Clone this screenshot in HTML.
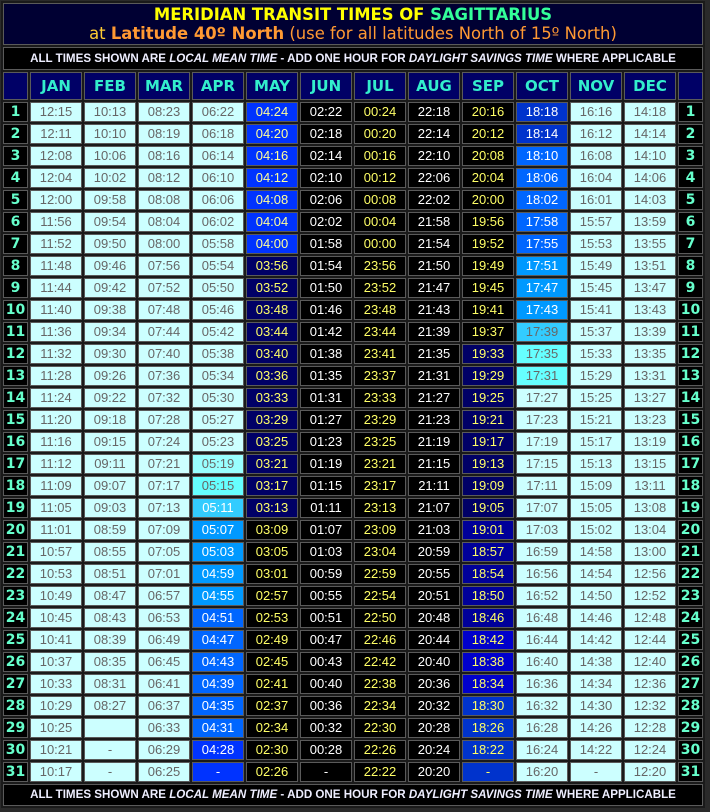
<!DOCTYPE html>
<html><head><meta charset="utf-8"><style>
body{margin:0;background:#2a2a2a;width:710px;height:812px;overflow:hidden}
table{position:absolute;left:1px;top:1px;border-collapse:separate;border-spacing:2px;background:#1a1a1a}
td{border:1px solid #5a5a5a;padding:0;text-align:center;font-family:"Liberation Sans",Arial,sans-serif;font-size:13px;height:20px;line-height:18px;box-sizing:border-box;width:52px;background:#000;color:#fff}
td.d{width:25px;font-family:"DejaVu Sans",Verdana,sans-serif;font-weight:bold;font-size:14px;color:#66ffcc;background:#000}
tr.h td{height:28px;background:#000066;font-family:"DejaVu Sans",Verdana,sans-serif;font-weight:bold;font-size:15px;color:#33eecc}
td.t{height:42px;background:#000033;line-height:19px;font-family:"DejaVu Sans",Verdana,sans-serif;font-size:16.4px}
td.bar{height:23px;background:#000;font-family:"Liberation Sans",Arial,sans-serif;font-weight:bold;font-size:11.6px;color:#eeeeff}
.l{background:#ccffff;color:#666}
.k{background:#000;color:#fff}
.y{background:#000;color:#ffff66}
.n{background:#000066;color:#ffff66}
.n2{background:#000099;color:#ffff66}
.n3{background:#0000cc;color:#ffff66}
.n4{background:#0033cc;color:#ffff66}
.mb{background:#0033ff;color:#ffff99}
.o1{background:#0033cc;color:#fff}
.b6{background:#0066ff;color:#fff}
.b9{background:#0099ff;color:#fff}
.c3w{background:#33ccff;color:#fff}
.c3{background:#33ccff;color:#666}
.c6{background:#66ffff;color:#666}
.c9{background:#99ffff;color:#666}
.b3{background:#0033ff;color:#fff}
</style></head><body>
<table>
<tr><td class="t" colspan="14"><b style="color:#ffff00">MERIDIAN TRANSIT TIMES OF <span style="color:#33ff99">SAGITTARIUS</span></b><br><span style="color:#ffcc33">at</span> <span style="color:#ff9933"><b>Latitude 40º North</b> (use for all latitudes North of 15º North)</span></td></tr>
<tr><td class="bar" colspan="14">ALL TIMES SHOWN ARE <i>LOCAL MEAN TIME</i> - ADD ONE HOUR FOR <i>DAYLIGHT SAVINGS TIME</i> WHERE APPLICABLE</td></tr>
<tr class="h"><td class="d" style="background:#000066"></td><td>JAN</td><td>FEB</td><td>MAR</td><td>APR</td><td>MAY</td><td>JUN</td><td>JUL</td><td>AUG</td><td>SEP</td><td>OCT</td><td>NOV</td><td>DEC</td><td class="d" style="background:#000066"></td></tr>
<tr><td class="d">1</td><td class="l">12:15</td><td class="l">10:13</td><td class="l">08:23</td><td class="l">06:22</td><td class="mb">04:24</td><td class="k">02:22</td><td class="y">00:24</td><td class="k">22:18</td><td class="y">20:16</td><td class="o1">18:18</td><td class="l">16:16</td><td class="l">14:18</td><td class="d">1</td></tr>
<tr><td class="d">2</td><td class="l">12:11</td><td class="l">10:10</td><td class="l">08:19</td><td class="l">06:18</td><td class="mb">04:20</td><td class="k">02:18</td><td class="y">00:20</td><td class="k">22:14</td><td class="y">20:12</td><td class="o1">18:14</td><td class="l">16:12</td><td class="l">14:14</td><td class="d">2</td></tr>
<tr><td class="d">3</td><td class="l">12:08</td><td class="l">10:06</td><td class="l">08:16</td><td class="l">06:14</td><td class="mb">04:16</td><td class="k">02:14</td><td class="y">00:16</td><td class="k">22:10</td><td class="y">20:08</td><td class="b6">18:10</td><td class="l">16:08</td><td class="l">14:10</td><td class="d">3</td></tr>
<tr><td class="d">4</td><td class="l">12:04</td><td class="l">10:02</td><td class="l">08:12</td><td class="l">06:10</td><td class="mb">04:12</td><td class="k">02:10</td><td class="y">00:12</td><td class="k">22:06</td><td class="y">20:04</td><td class="b6">18:06</td><td class="l">16:04</td><td class="l">14:06</td><td class="d">4</td></tr>
<tr><td class="d">5</td><td class="l">12:00</td><td class="l">09:58</td><td class="l">08:08</td><td class="l">06:06</td><td class="mb">04:08</td><td class="k">02:06</td><td class="y">00:08</td><td class="k">22:02</td><td class="y">20:00</td><td class="b6">18:02</td><td class="l">16:01</td><td class="l">14:03</td><td class="d">5</td></tr>
<tr><td class="d">6</td><td class="l">11:56</td><td class="l">09:54</td><td class="l">08:04</td><td class="l">06:02</td><td class="mb">04:04</td><td class="k">02:02</td><td class="y">00:04</td><td class="k">21:58</td><td class="y">19:56</td><td class="b6">17:58</td><td class="l">15:57</td><td class="l">13:59</td><td class="d">6</td></tr>
<tr><td class="d">7</td><td class="l">11:52</td><td class="l">09:50</td><td class="l">08:00</td><td class="l">05:58</td><td class="mb">04:00</td><td class="k">01:58</td><td class="y">00:00</td><td class="k">21:54</td><td class="y">19:52</td><td class="b6">17:55</td><td class="l">15:53</td><td class="l">13:55</td><td class="d">7</td></tr>
<tr><td class="d">8</td><td class="l">11:48</td><td class="l">09:46</td><td class="l">07:56</td><td class="l">05:54</td><td class="n">03:56</td><td class="k">01:54</td><td class="y">23:56</td><td class="k">21:50</td><td class="y">19:49</td><td class="b9">17:51</td><td class="l">15:49</td><td class="l">13:51</td><td class="d">8</td></tr>
<tr><td class="d">9</td><td class="l">11:44</td><td class="l">09:42</td><td class="l">07:52</td><td class="l">05:50</td><td class="n">03:52</td><td class="k">01:50</td><td class="y">23:52</td><td class="k">21:47</td><td class="y">19:45</td><td class="b9">17:47</td><td class="l">15:45</td><td class="l">13:47</td><td class="d">9</td></tr>
<tr><td class="d">10</td><td class="l">11:40</td><td class="l">09:38</td><td class="l">07:48</td><td class="l">05:46</td><td class="n">03:48</td><td class="k">01:46</td><td class="y">23:48</td><td class="k">21:43</td><td class="y">19:41</td><td class="b9">17:43</td><td class="l">15:41</td><td class="l">13:43</td><td class="d">10</td></tr>
<tr><td class="d">11</td><td class="l">11:36</td><td class="l">09:34</td><td class="l">07:44</td><td class="l">05:42</td><td class="n">03:44</td><td class="k">01:42</td><td class="y">23:44</td><td class="k">21:39</td><td class="y">19:37</td><td class="c3">17:39</td><td class="l">15:37</td><td class="l">13:39</td><td class="d">11</td></tr>
<tr><td class="d">12</td><td class="l">11:32</td><td class="l">09:30</td><td class="l">07:40</td><td class="l">05:38</td><td class="n">03:40</td><td class="k">01:38</td><td class="y">23:41</td><td class="k">21:35</td><td class="n">19:33</td><td class="c6">17:35</td><td class="l">15:33</td><td class="l">13:35</td><td class="d">12</td></tr>
<tr><td class="d">13</td><td class="l">11:28</td><td class="l">09:26</td><td class="l">07:36</td><td class="l">05:34</td><td class="n">03:36</td><td class="k">01:35</td><td class="y">23:37</td><td class="k">21:31</td><td class="n">19:29</td><td class="c6">17:31</td><td class="l">15:29</td><td class="l">13:31</td><td class="d">13</td></tr>
<tr><td class="d">14</td><td class="l">11:24</td><td class="l">09:22</td><td class="l">07:32</td><td class="l">05:30</td><td class="n">03:33</td><td class="k">01:31</td><td class="y">23:33</td><td class="k">21:27</td><td class="n">19:25</td><td class="l">17:27</td><td class="l">15:25</td><td class="l">13:27</td><td class="d">14</td></tr>
<tr><td class="d">15</td><td class="l">11:20</td><td class="l">09:18</td><td class="l">07:28</td><td class="l">05:27</td><td class="n">03:29</td><td class="k">01:27</td><td class="y">23:29</td><td class="k">21:23</td><td class="n">19:21</td><td class="l">17:23</td><td class="l">15:21</td><td class="l">13:23</td><td class="d">15</td></tr>
<tr><td class="d">16</td><td class="l">11:16</td><td class="l">09:15</td><td class="l">07:24</td><td class="l">05:23</td><td class="n">03:25</td><td class="k">01:23</td><td class="y">23:25</td><td class="k">21:19</td><td class="n">19:17</td><td class="l">17:19</td><td class="l">15:17</td><td class="l">13:19</td><td class="d">16</td></tr>
<tr><td class="d">17</td><td class="l">11:12</td><td class="l">09:11</td><td class="l">07:21</td><td class="c9">05:19</td><td class="n">03:21</td><td class="k">01:19</td><td class="y">23:21</td><td class="k">21:15</td><td class="n">19:13</td><td class="l">17:15</td><td class="l">15:13</td><td class="l">13:15</td><td class="d">17</td></tr>
<tr><td class="d">18</td><td class="l">11:09</td><td class="l">09:07</td><td class="l">07:17</td><td class="c6">05:15</td><td class="n">03:17</td><td class="k">01:15</td><td class="y">23:17</td><td class="k">21:11</td><td class="n">19:09</td><td class="l">17:11</td><td class="l">15:09</td><td class="l">13:11</td><td class="d">18</td></tr>
<tr><td class="d">19</td><td class="l">11:05</td><td class="l">09:03</td><td class="l">07:13</td><td class="c3w">05:11</td><td class="n">03:13</td><td class="k">01:11</td><td class="y">23:13</td><td class="k">21:07</td><td class="n">19:05</td><td class="l">17:07</td><td class="l">15:05</td><td class="l">13:08</td><td class="d">19</td></tr>
<tr><td class="d">20</td><td class="l">11:01</td><td class="l">08:59</td><td class="l">07:09</td><td class="b9">05:07</td><td class="y">03:09</td><td class="k">01:07</td><td class="y">23:09</td><td class="k">21:03</td><td class="n2">19:01</td><td class="l">17:03</td><td class="l">15:02</td><td class="l">13:04</td><td class="d">20</td></tr>
<tr><td class="d">21</td><td class="l">10:57</td><td class="l">08:55</td><td class="l">07:05</td><td class="b9">05:03</td><td class="y">03:05</td><td class="k">01:03</td><td class="y">23:04</td><td class="k">20:59</td><td class="n2">18:57</td><td class="l">16:59</td><td class="l">14:58</td><td class="l">13:00</td><td class="d">21</td></tr>
<tr><td class="d">22</td><td class="l">10:53</td><td class="l">08:51</td><td class="l">07:01</td><td class="b9">04:59</td><td class="y">03:01</td><td class="k">00:59</td><td class="y">22:59</td><td class="k">20:55</td><td class="n2">18:54</td><td class="l">16:56</td><td class="l">14:54</td><td class="l">12:56</td><td class="d">22</td></tr>
<tr><td class="d">23</td><td class="l">10:49</td><td class="l">08:47</td><td class="l">06:57</td><td class="b9">04:55</td><td class="y">02:57</td><td class="k">00:55</td><td class="y">22:54</td><td class="k">20:51</td><td class="n2">18:50</td><td class="l">16:52</td><td class="l">14:50</td><td class="l">12:52</td><td class="d">23</td></tr>
<tr><td class="d">24</td><td class="l">10:45</td><td class="l">08:43</td><td class="l">06:53</td><td class="b6">04:51</td><td class="y">02:53</td><td class="k">00:51</td><td class="y">22:50</td><td class="k">20:48</td><td class="n2">18:46</td><td class="l">16:48</td><td class="l">14:46</td><td class="l">12:48</td><td class="d">24</td></tr>
<tr><td class="d">25</td><td class="l">10:41</td><td class="l">08:39</td><td class="l">06:49</td><td class="b6">04:47</td><td class="y">02:49</td><td class="k">00:47</td><td class="y">22:46</td><td class="k">20:44</td><td class="n3">18:42</td><td class="l">16:44</td><td class="l">14:42</td><td class="l">12:44</td><td class="d">25</td></tr>
<tr><td class="d">26</td><td class="l">10:37</td><td class="l">08:35</td><td class="l">06:45</td><td class="b6">04:43</td><td class="y">02:45</td><td class="k">00:43</td><td class="y">22:42</td><td class="k">20:40</td><td class="n3">18:38</td><td class="l">16:40</td><td class="l">14:38</td><td class="l">12:40</td><td class="d">26</td></tr>
<tr><td class="d">27</td><td class="l">10:33</td><td class="l">08:31</td><td class="l">06:41</td><td class="b6">04:39</td><td class="y">02:41</td><td class="k">00:40</td><td class="y">22:38</td><td class="k">20:36</td><td class="n3">18:34</td><td class="l">16:36</td><td class="l">14:34</td><td class="l">12:36</td><td class="d">27</td></tr>
<tr><td class="d">28</td><td class="l">10:29</td><td class="l">08:27</td><td class="l">06:37</td><td class="b6">04:35</td><td class="y">02:37</td><td class="k">00:36</td><td class="y">22:34</td><td class="k">20:32</td><td class="n4">18:30</td><td class="l">16:32</td><td class="l">14:30</td><td class="l">12:32</td><td class="d">28</td></tr>
<tr><td class="d">29</td><td class="l">10:25</td><td class="l"></td><td class="l">06:33</td><td class="b6">04:31</td><td class="y">02:34</td><td class="k">00:32</td><td class="y">22:30</td><td class="k">20:28</td><td class="n4">18:26</td><td class="l">16:28</td><td class="l">14:26</td><td class="l">12:28</td><td class="d">29</td></tr>
<tr><td class="d">30</td><td class="l">10:21</td><td class="l">-</td><td class="l">06:29</td><td class="b3">04:28</td><td class="y">02:30</td><td class="k">00:28</td><td class="y">22:26</td><td class="k">20:24</td><td class="n4">18:22</td><td class="l">16:24</td><td class="l">14:22</td><td class="l">12:24</td><td class="d">30</td></tr>
<tr><td class="d">31</td><td class="l">10:17</td><td class="l">-</td><td class="l">06:25</td><td class="b3">-</td><td class="y">02:26</td><td class="k">-</td><td class="y">22:22</td><td class="k">20:20</td><td class="n4">-</td><td class="l">16:20</td><td class="l">-</td><td class="l">12:20</td><td class="d">31</td></tr>
<tr><td class="bar" colspan="14" style="height:22px">ALL TIMES SHOWN ARE <i>LOCAL MEAN TIME</i> - ADD ONE HOUR FOR <i>DAYLIGHT SAVINGS TIME</i> WHERE APPLICABLE</td></tr>
</table>
</body></html>
